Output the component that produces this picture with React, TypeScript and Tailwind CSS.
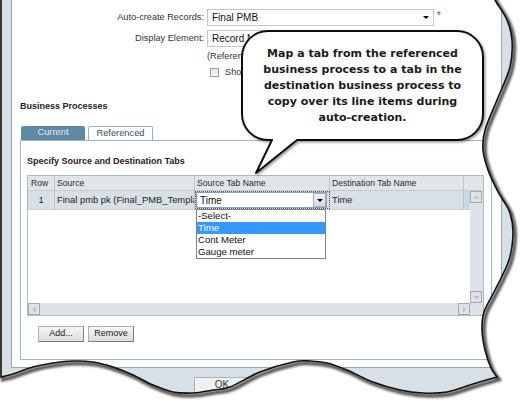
import React from "react";

type P = [number, number];

function smoothPath(pts: P[], move: boolean): string {
  let d = (move ? "M " : "L ") + pts[0][0] + " " + pts[0][1] + " ";
  for (let i = 0; i < pts.length - 1; i++) {
    const p0 = pts[i - 1] || pts[i];
    const p1 = pts[i];
    const p2 = pts[i + 1];
    const p3 = pts[i + 2] || p2;
    const c1x = p1[0] + (p2[0] - p0[0]) / 6;
    const c1y = p1[1] + (p2[1] - p0[1]) / 6;
    const c2x = p2[0] - (p3[0] - p1[0]) / 6;
    const c2y = p2[1] - (p3[1] - p1[1]) / 6;
    d += `C ${c1x.toFixed(2)} ${c1y.toFixed(2)} ${c2x.toFixed(2)} ${c2y.toFixed(2)} ${p2[0]} ${p2[1]} `;
  }
  return d;
}

const RIGHT: P[] = [
  [490, -12], [495, 0], [507, 20], [512, 40], [510, 67], [497, 100], [485, 130], [483, 150],
  [488, 170], [497, 190], [503, 200], [510, 213], [513, 233], [509, 260], [495, 290], [484, 312],
  [482, 330], [485, 350], [491, 368], [497, 377],
];
const BOTTOM: P[] = [
  [497, 377], [473, 384], [447, 392], [423, 393], [400, 390], [373, 382], [347, 370], [327, 363],
  [310, 361], [293, 362], [260, 372], [230, 387], [213, 390], [193, 393], [173, 392], [153, 385],
  [133, 375], [113, 367], [93, 362], [73, 361], [53, 363], [33, 367], [13, 374], [1, 377],
];
const SHAPE = smoothPath(RIGHT, true) + smoothPath(BOTTOM, false) + "L 1 -12 Z";
const OUTSIDE = `M -20 -20 H 543 V 423 H -20 Z ${SHAPE}`;

function Tri({ color = "#000" }: { color?: string }) {
  return (
    <svg width="6" height="3" viewBox="0 0 6 3" className="shrink-0">
      <path d="M0 0H6L3 3Z" fill={color} />
    </svg>
  );
}

function ScrollBtn({ dir }: { dir: "up" | "down" | "left" | "right" }) {
  const d =
    dir === "up" ? "M1.5 5.5L4.5 2.5L7.5 5.5Z" :
    dir === "down" ? "M1.5 3L4.5 6L7.5 3Z" :
    dir === "left" ? "M5.5 1.5L2.5 4.5L5.5 7.5Z" : "M3 1.5L6 4.5L3 7.5Z";
  return (
    <div className="w-[12px] h-[12px] border border-[#a8a8a8] bg-[#dde3e8] flex items-center justify-center">
      <svg width="9" height="9" viewBox="0 0 9 9">
        <path d={d} fill="#b9bec2" />
      </svg>
    </div>
  );
}

function Btn({ children }: { children: React.ReactNode }) {
  return (
    <div className="w-[46px] h-[16px] border border-[#b0b0b0] border-r-[#7d7d7d] border-b-[#7d7d7d] bg-linear-to-b from-[#f6f6f6] to-[#dcdcdc] flex items-center justify-center text-[9px] text-[#222]">
      {children}
    </div>
  );
}

export default function App() {
  return (
    <div className="relative w-[523px] h-[403px] overflow-hidden bg-[#d8e0e6] font-['Liberation_Sans',Arial,sans-serif] text-[#333]">
      {/* dialog content */}
      <div className="ml-[11px] w-[491px] h-[368px] bg-white border-x border-b border-[#8fa9ba] flex flex-col">
        {/* row 1 */}
        <div className="mt-[9px] flex h-[17px] items-center">
          <div className="w-[192px] text-right text-[9.2px] leading-none">Auto-create Records:</div>
          <div className="ml-[3px] w-[227px] h-[17px] border border-[#c6c6c6] bg-white flex items-center justify-between pl-[4px] pr-[4px] text-[10px] text-[#111]">
            <span>Final PMB</span>
            <Tri />
          </div>
          <span className="ml-[3px] self-start mt-[2px] text-[10px] leading-none text-[#e0262b]">*</span>
        </div>
        {/* row 2 */}
        <div className="mt-[4px] flex h-[17px] items-center">
          <div className="w-[192px] text-right text-[9.2px] leading-none">Display Element:</div>
          <div className="ml-[3px] w-[227px] h-[17px] border border-[#c6c6c6] bg-white flex items-center pl-[4px] text-[10px] text-[#111]">
            <span className="max-w-[38px] overflow-hidden whitespace-nowrap">Record Name</span>
          </div>
        </div>
        {/* row 3 */}
        <div className="mt-[4px] ml-[195px] w-[35px] overflow-hidden whitespace-nowrap h-[10px] text-[9.2px] leading-[10px]">(Referenced</div>
        {/* row 4 */}
        <div className="mt-[7px] ml-[198px] flex items-center h-[9px]">
          <div className="w-[9px] h-[9px] border border-[#9a9a9a] bg-linear-to-b from-[#e4e4e4] to-[#f8f8f8]" />
          <span className="ml-[6px] w-[16px] overflow-hidden whitespace-nowrap text-[9.2px] leading-none">Show</span>
        </div>
        {/* Business processes */}
        <div className="mt-[23px] ml-[8px] h-[12px] text-[9px] font-bold leading-[12px] text-[#222]">Business Processes</div>
        {/* tabs */}
        <div className="mt-[14px] ml-[9px] flex h-[14px]">
          <div className="w-[64px] h-[14px] bg-[#5d89a5] rounded-t-[2px] flex items-center justify-center text-[9.3px] text-[#e3ebf1]">Current</div>
          <div className="ml-[3px] w-[65px] h-[14px] bg-white border border-b-0 border-[#97b3c5] rounded-t-[2px] flex items-center justify-center text-[9.3px] text-[#2f4e63]">Referenced</div>
        </div>
        {/* tab panel */}
        <div className="ml-[8px] w-[472px] h-[220px] border border-[#9db8c9] flex flex-col">
          <div className="mt-[14px] pl-[6px] h-[12px] text-[9px] font-bold leading-[12px] text-[#222]">Specify Source and Destination Tabs</div>
          {/* grid */}
          <div className="mt-[8px] ml-[6px] w-[457px] h-[141px] border border-[#a5bccb] flex flex-col">
            <div className="h-[15px] flex bg-[#dfe5e9] border-b border-[#c7cbce] text-[8.6px] text-[#2b2b2b] leading-[14px]">
              <div className="w-[27px] border-r border-[#c6c4ba] pl-[3px]">Row</div>
              <div className="w-[140px] border-r border-[#c6c4ba] pl-[2px]">Source</div>
              <div className="w-[135px] border-r border-[#c6c4ba] pl-[2px]">Source Tab Name</div>
              <div className="w-[134px] border-r border-[#c6c4ba] pl-[2px]">Destination Tab Name</div>
              <div className="flex-1" />
            </div>
            <div className="h-[112px] flex">
              <div className="w-[442px] flex flex-col">
                <div className="h-[19px] flex items-stretch bg-[#d9e0e5] border-b border-[#c9cdd0] text-[9.4px] text-[#1e1e1e]">
                  <div className="w-[27px] border-r border-[#c6c4ba] flex items-center justify-center">1</div>
                  <div className="w-[140px] border-r border-[#c6c4ba] pl-[2px] flex items-center overflow-hidden whitespace-nowrap">Final pmb pk (Final_PMB_Templa</div>
                  <div className="relative w-[135px] border border-dotted border-[#555] flex items-center">
                    <div className="w-[131px] h-[16px] border border-[#8aa2b8] bg-white flex items-center justify-between pl-[3px] text-[10px] text-[#111]">
                      <span>Time</span>
                      <div className="w-[13px] h-[14px] border border-[#a7b0b8] bg-linear-to-b from-[#f2f2f2] to-[#d6d9dc] flex items-center justify-center">
                        <Tri />
                      </div>
                    </div>
                    <div className="absolute left-0 top-[17px] z-10 w-[130px] border border-[#7f8388] bg-white text-[9.6px] text-[#111] leading-[12px]">
                      <div className="h-[12px] pl-[1px]">-Select-</div>
                      <div className="h-[12px] pl-[1px] bg-[#3399ff] text-white">Time</div>
                      <div className="h-[12px] pl-[1px]">Cont Meter</div>
                      <div className="h-[12px] pl-[1px]">Gauge meter</div>
                    </div>
                  </div>
                  <div className="w-[134px] border-r border-[#c6c4ba] pl-[2px] flex items-center">Time</div>
                  <div className="flex-1 bg-[#c8d8e7]" />
                </div>
                <div className="flex-1 bg-white" />
              </div>
              <div className="w-[13px] bg-[#dde3e8] flex flex-col justify-between">
                <ScrollBtn dir="up" />
                <ScrollBtn dir="down" />
              </div>
            </div>
            <div className="h-[12px] flex">
              <div className="w-[442px] bg-[#dde3e8] flex justify-between">
                <ScrollBtn dir="left" />
                <ScrollBtn dir="right" />
              </div>
              <div className="flex-1 bg-[#dde3e8]" />
            </div>
          </div>
          {/* buttons */}
          <div className="mt-[10px] ml-[17px] flex gap-[4px]">
            <Btn>Add...</Btn>
            <Btn>Remove</Btn>
          </div>
        </div>
      </div>
      {/* button bar */}
      <div className="mt-[9px] ml-[194px] w-[56px] h-[20px] border border-[#aab3ba] bg-[#eef1f3] flex justify-center pt-[1px] text-[10px] leading-[12px] text-[#333]">OK</div>

      {/* callout balloon */}
      <svg className="absolute left-0 top-0 pointer-events-none" width={523} height={403} viewBox="0 0 523 403">
        <defs>
          <filter id="bshadow" x="-10%" y="-10%" width="130%" height="130%">
            <feDropShadow dx="1.5" dy="1.5" stdDeviation="0.8" floodColor="#000" floodOpacity="0.4" />
          </filter>
        </defs>
        <path
          d="M 268 31 H 457 A 26 26 0 0 1 483 57 V 114 A 26 26 0 0 1 457 140 H 297 L 256 173 L 272 140 H 268 A 26 26 0 0 1 242 114 V 57 A 26 26 0 0 1 268 31 Z"
          fill="#fff"
          stroke="#111"
          strokeWidth={2}
          strokeLinejoin="round"
          filter="url(#bshadow)"
        />
      </svg>
      <div className="absolute left-[242px] top-[31px] w-[241px] h-[109px] flex items-center justify-center text-center font-['DejaVu_Sans',Verdana,sans-serif] font-bold text-[11px] leading-[16px] text-[#1a1a1a]">
        <div>
          Map a tab from the referenced<br />
          business process to a tab in the<br />
          destination business process to<br />
          copy over its line items during<br />
          auto-creation.
        </div>
      </div>

      {/* torn paper edge */}
      <svg className="absolute left-0 top-0 pointer-events-none" width={523} height={403} viewBox="0 0 523 403">
        <defs>
          <clipPath id="outside">
            <path clipRule="evenodd" d={OUTSIDE} />
          </clipPath>
          <filter id="tblur" x="-5%" y="-5%" width="110%" height="110%">
            <feGaussianBlur stdDeviation="1" />
          </filter>
        </defs>
        <path fillRule="evenodd" fill="#fff" d={OUTSIDE} />
        <g clipPath="url(#outside)">
          <path d={SHAPE} fill="none" stroke="#5a5a5a" strokeWidth={4} transform="translate(2 2.5)" filter="url(#tblur)" />
        </g>
        <path d={SHAPE} fill="none" stroke="#111" strokeWidth={1.6} />
      </svg>
    </div>
  );
}
